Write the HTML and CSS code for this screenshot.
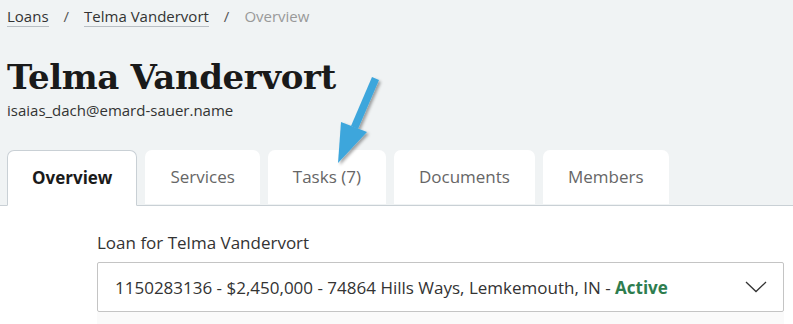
FILE: index.html
```html
<!DOCTYPE html>
<html lang="en">
<head>
    <meta charset="UTF-8">
    <meta name="viewport" content="width=device-width, initial-scale=1.0">
    <title>Telma Vandervort - Overview</title>
    <link rel="stylesheet" href="styles.css">
</head>
<body>

    <div class="page-head">
        <nav class="breadcrumb">
            <a href="#">Loans</a>
            <span class="sep">/</span>
            <a href="#">Telma Vandervort</a>
            <span class="sep">/</span>
            <span class="current">Overview</span>
        </nav>

        <h1>Telma Vandervort</h1>
        <div class="email">isaias_dach@emard-sauer.name</div>

        <div class="tabs">
            <a href="#" class="tab active">Overview</a>
            <a href="#" class="tab">Services</a>
            <a href="#" class="tab">Tasks (7)</a>
            <a href="#" class="tab">Documents</a>
            <a href="#" class="tab">Members</a>
        </div>

        <!-- annotation arrow pointing at the Tasks tab -->
        <svg class="arrow" width="70" height="110" viewBox="0 0 70 110">
            <defs>
                <filter id="shadow" x="-30%" y="-30%" width="160%" height="160%">
                    <feDropShadow dx="2" dy="2" stdDeviation="1.5" flood-color="#000" flood-opacity="0.35"/>
                </filter>
            </defs>
            <g filter="url(#shadow)" fill="#3ea6dc">
                <path d="M45 7 L52 10 L31 59 L24 56 Z"/>
                <path d="M14 52 L40 62 L11 93 Z"/>
            </g>
        </svg>
    </div>

    <div class="content">
        <label class="field-label" for="loan-select">Loan for Telma Vandervort</label>
        <div class="select" id="loan-select">
            <span>1150283136 - $2,450,000 - 74864 Hills Ways, Lemkemouth, IN - <b class="status">Active</b></span>
            <svg class="chevron" width="22" height="12" viewBox="0 0 22 12">
                <path d="M1 1 L11 10.5 L21 1" fill="none" stroke="#333" stroke-width="1.3"/>
            </svg>
        </div>
        <div class="panel"></div>
    </div>

</body>
</html>
```

FILE: styles.css
```css
body {
    font-family: "Open Sans", Arial, sans-serif;
    color: #333;
    background-color: #fff;
    margin: 0;
    padding: 0;
}

.page-head {
    position: relative;
    background-color: #f0f3f4;
    padding: 6px 0 0 7px;
    border-bottom: 1px solid #c9d0d5;
}

.breadcrumb {
    font-size: 15px;
    line-height: 20px;
    display: flex;
    gap: 15px;
}

.breadcrumb a {
    color: #333;
    text-decoration: none;
    border-bottom: 1px solid #b8bec3;
}

.breadcrumb .sep {
    color: #555;
}

.breadcrumb .current {
    color: #999;
}

h1 {
    font-family: "DejaVu Serif", Georgia, serif;
    font-weight: bold;
    font-size: 34px;
    line-height: 44px;
    letter-spacing: -0.4px;
    color: #1a1a1a;
    margin: 28px 0 0 0;
}

.email {
    font-size: 15px;
    line-height: 20px;
    margin-top: 1px;
}

.tabs {
    display: flex;
    gap: 8px;
    margin-top: 30px;
}

.tab {
    display: block;
    height: 54px;
    line-height: 54px;
    padding: 0 25px;
    font-size: 17px;
    color: #666;
    text-decoration: none;
    background-color: #fff;
    border-radius: 7px 7px 0 0;
    margin-bottom: -1px;
}

.tab.active {
    color: #1a1a1a;
    font-weight: bold;
    padding: 0 24px;
    border: 1px solid #c9d0d5;
    border-bottom: 1px solid #fff;
}

.arrow {
    position: absolute;
    left: 327px;
    top: 70px;
}

.content {
    padding: 26px 9px 0 97px;
}

.field-label {
    display: block;
    font-size: 17px;
    line-height: 22px;
    color: #333;
}

.select {
    display: flex;
    align-items: center;
    justify-content: space-between;
    height: 48px;
    margin-top: 8px;
    padding: 0 16px 0 17px;
    border: 1px solid #c4c4c4;
    border-radius: 2px;
    font-size: 17px;
    color: #333;
}

.status {
    color: #2e7d4f;
}

.chevron {
    display: block;
}

.panel {
    height: 20px;
    background-color: #fafafa;
}
```
